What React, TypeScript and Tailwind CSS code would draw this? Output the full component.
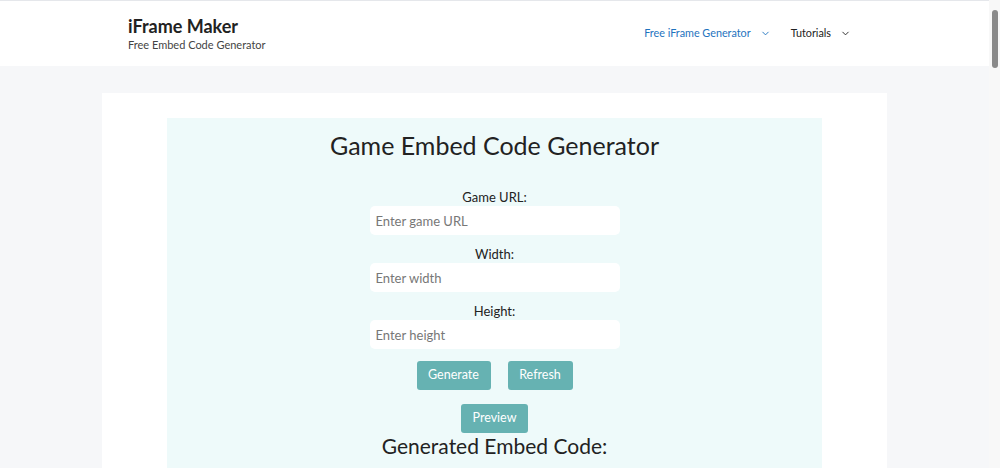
import { ChevronDown } from "lucide-react";

function Field({ label, placeholder }: { label: string; placeholder: string }) {
  return (
    <div className="flex flex-col items-center">
      <label className="text-[13px] text-[#222] leading-[18px]">{label}</label>
      <input
        type="text"
        placeholder={placeholder}
        className="w-[250px] h-[29px] rounded-[5px] bg-white px-[6px] text-[13px] outline-none placeholder:text-[#777]"
      />
    </div>
  );
}

export default function App() {
  return (
    <div className="h-screen flex overflow-hidden text-[#222]" style={{ fontFamily: 'Lato, "Noto Sans", sans-serif' }}>
      <div className="flex-1 bg-[#f6f7f9]">
        <header className="bg-white border-t border-[#e5e7eb] h-[66px]">
          <div className="max-w-[785px] mx-auto px-[26px] h-full flex items-center justify-between">
            <div className="flex flex-col">
              <span className="text-[18px] font-bold leading-[22px] text-[#222]">iFrame Maker</span>
              <span className="text-[11px] text-[#444] leading-[15px]">Free Embed Code Generator</span>
            </div>
            <nav className="flex items-center gap-[20px] text-[10.8px] mr-[10px]">
              <a className="flex items-center gap-[9px] text-[#1e73be]">
                Free iFrame Generator
                <ChevronDown className="w-[11px] h-[11px]" strokeWidth={2} />
              </a>
              <a className="flex items-center gap-[9px] text-[#222]">
                Tutorials
                <ChevronDown className="w-[11px] h-[11px]" strokeWidth={2} />
              </a>
            </nav>
          </div>
        </header>

        <main className="pt-[27px]">
          <div className="max-w-[785px] mx-auto bg-white pt-[25px] px-[65px] pb-[40px]">
            <div className="bg-[#eefafa] min-h-[600px] flex flex-col items-center pt-[8px]">
              <h1 className="text-[25px] leading-[38px] text-[#222] mb-[24px]">Game Embed Code Generator</h1>
              <div className="flex flex-col gap-[10px]">
                <Field label="Game URL:" placeholder="Enter game URL" />
                <Field label="Width:" placeholder="Enter width" />
                <Field label="Height:" placeholder="Enter height" />
              </div>
              <div className="flex gap-[17px] mt-[12px]">
                <button className="h-[29px] w-[74px] rounded-[3px] bg-[#66b2b2] text-white text-[12.5px]">Generate</button>
                <button className="h-[29px] w-[65px] rounded-[3px] bg-[#66b2b2] text-white text-[12.5px]">Refresh</button>
              </div>
              <button className="h-[29px] w-[67px] rounded-[3px] bg-[#66b2b2] text-white text-[12.5px] mt-[14px]">Preview</button>
              <h2 className="text-[21px] leading-[24px] text-[#222] mt-[1px]">Generated Embed Code:</h2>
            </div>
          </div>
        </main>
      </div>
      <div className="w-[11px] bg-[#f8f8f8] flex justify-center pt-[10px]">
        <div className="w-[6px] h-[58px] rounded-full bg-[#8a8a8a]" />
      </div>
    </div>
  );
}
